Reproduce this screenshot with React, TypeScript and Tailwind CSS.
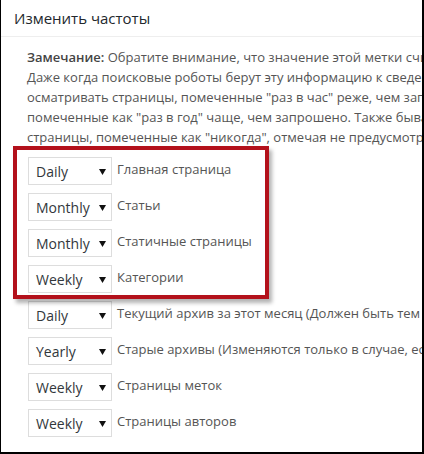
import React from 'react';

const noteLines = [
  'Даже когда поисковые роботы берут эту информацию к сведению при принятии решений, они могут',
  'осматривать страницы, помеченные "раз в час" реже, чем запрошено, и они могут осматривать страницы,',
  'помеченные как "раз в год" чаще, чем запрошено. Также бывает, что поисковые роботы осматривают',
  'страницы, помеченные как "никогда", отмечая не предусмотренные изменения на этих страницах.',
];

const rows = [
  { value: 'Daily', label: 'Главная страница' },
  { value: 'Monthly', label: 'Статьи' },
  { value: 'Monthly', label: 'Статичные страницы' },
  { value: 'Weekly', label: 'Категории' },
  { value: 'Daily', label: 'Текущий архив за этот месяц (Должен быть тем же, что и для главной страницы)' },
  { value: 'Yearly', label: 'Старые архивы (Изменяются только в случае, если вы редактируете старые записи)' },
  { value: 'Weekly', label: 'Страницы меток' },
  { value: 'Weekly', label: 'Страницы авторов' },
];

function FakeSelect({ value }: { value: string }) {
  return (
    <div className="relative flex h-[28px] w-[84px] shrink-0 items-center border border-[#dddddd] bg-white pl-[7px] text-[14px] text-[#32373c]">
      <span>{value}</span>
      <svg
        className="absolute left-[70px] top-[11px]"
        width="7"
        height="6"
        viewBox="0 0 7 6"
      >
        <path d="M0 0 L7 0 L3.5 6 Z" fill="#111" />
      </svg>
    </div>
  );
}

export default function App() {
  return (
    <div
      className="relative h-[454px] w-[424px] overflow-hidden border-b-2 border-l border-r-2 border-black bg-white"
      style={{ fontFamily: '"Open Sans", "Noto Sans", sans-serif' }}
    >
      <div className="flex h-[37px] items-center border-b border-[#eeeeee] pl-[13px] text-[15px] text-[#23282d]">
        Изменить частоты
      </div>

      <div className="whitespace-nowrap pl-[26px] pt-[10px] text-[13px] leading-[20px] text-[#555555]">
        <div>
          <b className="font-semibold text-[#444]">Замечание:</b> Обратите внимание, что значение этой
          метки считается подсказкой, а не командой.
        </div>
        {noteLines.map((line, i) => (
          <div key={i}>{line}</div>
        ))}
      </div>

      <div className="mt-[10px] flex flex-col gap-[8px] pl-[27px]">
        {rows.map((row, i) => (
          <div key={i} className="flex items-center gap-[5px] whitespace-nowrap">
            <FakeSelect value={row.value} />
            <span className="-mt-[3px] text-[13px] text-[#555555]">{row.label}</span>
          </div>
        ))}
      </div>

      {/* annotation frame over the first four rows */}
      <div className="absolute left-[12px] top-[146px] h-[153px] w-[256px] border-4 border-[#b3111b] shadow-[3px_4px_4px_rgba(0,0,0,0.3)]" />
    </div>
  );
}
